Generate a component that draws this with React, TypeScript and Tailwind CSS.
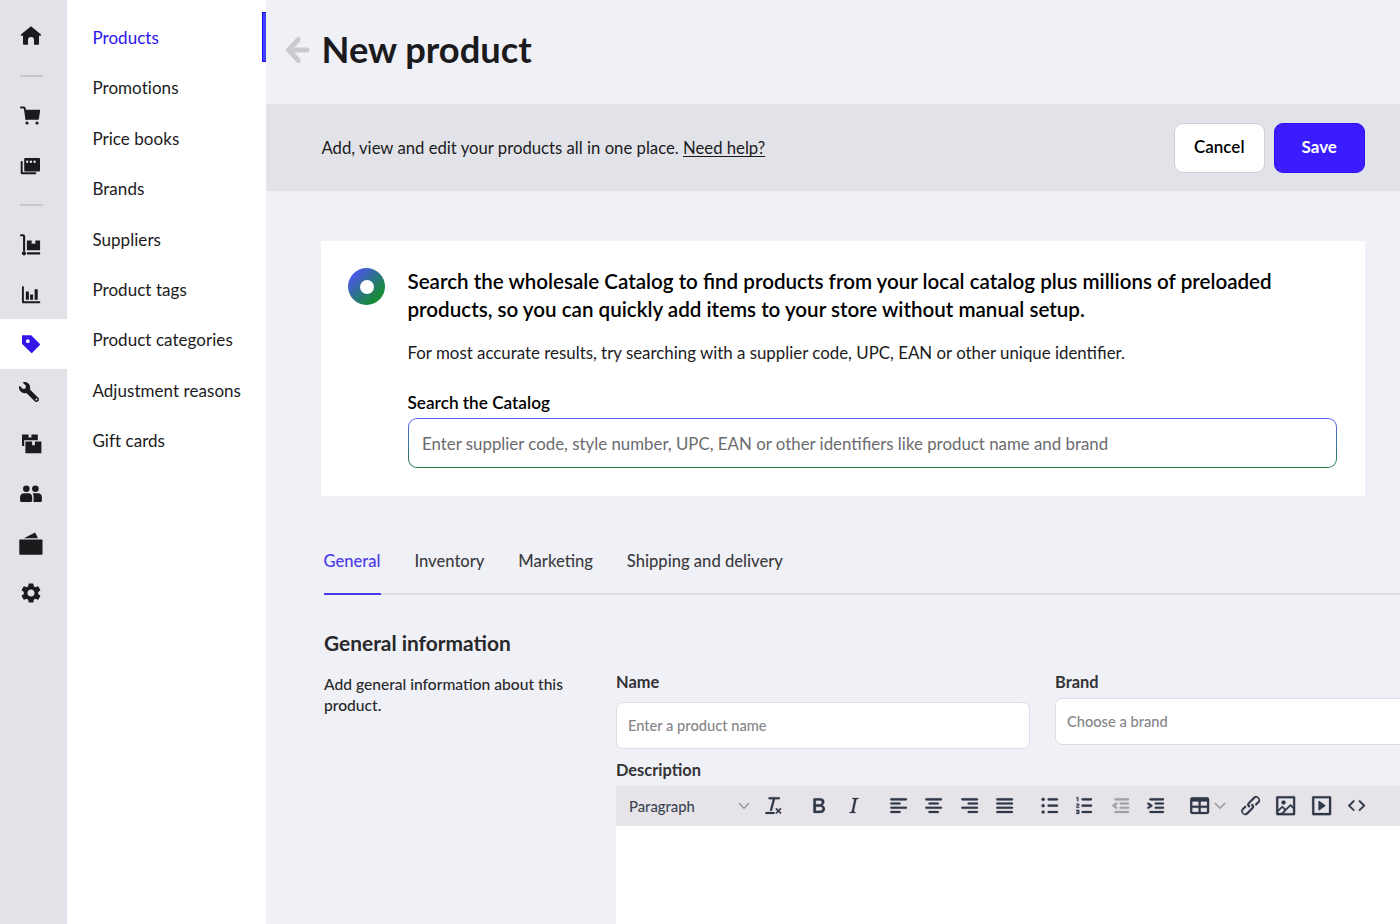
import React from 'react';
import { FaWrench } from 'react-icons/fa';
import { MdSettings } from 'react-icons/md';

type IconProps = { children: React.ReactNode; className?: string };

const NavIcon: React.FC<IconProps> = ({ children, className = 'text-[#1b1b1d]' }) => (
  <svg viewBox="0 0 24 24" className={`h-6 w-6 ${className}`} fill="currentColor">
    {children}
  </svg>
);

const HomeIcon = () => (
  <NavIcon>
    <path d="M12 2.3 22 10.6c.3.6 0 1.2-.7 1.2H20v8.1c0 .5-.3.8-.8.8H15v-4.6a3 3 0 0 0-6 0v4.6H4.8c-.5 0-.8-.3-.8-.8v-8.1H2.5c-.7 0-1-.6-.6-1.2Z" />
  </NavIcon>
);

const CartIcon = () => (
  <NavIcon>
    <path d="M2 3.5h2.8c.6 0 .9.3 1 .8l1.6 11" fill="none" stroke="currentColor" strokeWidth="1.9" strokeLinecap="round" />
    <path d="M5.8 5.7h14.6c.5 0 .8.4.7.9l-1.2 8.3c-.1.5-.4.8-.9.8H7.2Z" />
    <circle cx="8" cy="19" r="1.6" />
    <circle cx="18" cy="19" r="1.6" />
  </NavIcon>
);

const RegisterIcon = () => (
  <NavIcon>
    <rect x="5.2" y="4.1" width="15.8" height="13.3" rx="1" />
    <path d="M2.7 8v11.3h13.6" fill="none" stroke="currentColor" strokeWidth="2" strokeLinecap="round" strokeLinejoin="round" />
    <g fill="#e2e3e9">
      <circle cx="8.2" cy="7.8" r="1.2" />
      <circle cx="11.9" cy="7.8" r="1.2" />
      <circle cx="15.6" cy="7.8" r="1.2" />
    </g>
  </NavIcon>
);

const TrolleyIcon = () => (
  <NavIcon>
    <path d="M2 2.3h2c.7 0 1.1.4 1.1 1.1v14" fill="none" stroke="currentColor" strokeWidth="2.1" strokeLinecap="round" />
    <path d="M8.4 7.6h4.3v3.6l1.8-1 1.8 1V7.6h4.3c.3 0 .5.2.5.5v8.6c0 .3-.2.5-.5.5H8.4c-.3 0-.5-.2-.5-.5V8.1c0-.3.2-.5.5-.5Z" />
    <circle cx="5" cy="20.3" r="2.1" />
    <rect x="8" y="19.2" width="13.1" height="2.2" rx=".5" />
  </NavIcon>
);

const ChartIcon = () => (
  <NavIcon>
    <path d="M3.9 4v15.3h16.5" fill="none" stroke="currentColor" strokeWidth="1.9" strokeLinecap="round" strokeLinejoin="round" />
    <path d="M6.8 8.4h3.1v8.4H6.8zM11.1 11.6h3v5.2h-3zM15.6 6.3h3.1v10.5h-3.1z" />
  </NavIcon>
);

const TagIcon = () => (
  <NavIcon className="text-[#3316e8]">
    <path
      fillRule="evenodd"
      d="M3.6 3.2h7.9c.4 0 .8.1 1 .4l8.4 8.3c.4.4.4.8 0 1.2l-7.6 7.7c-.4.4-.9.4-1.2 0l-8.7-8.5c-.3-.3-.4-.6-.4-1V3.8c0-.4.2-.6.6-.6Zm5.2 4.1a1.9 1.9 0 1 0 0 3.8 1.9 1.9 0 0 0 0-3.8Z"
    />
  </NavIcon>
);

const BoxesIcon = () => (
  <NavIcon>
    <path d="M3 2.6h6.6v3.2l1.4-.6 1.4.6V2.6h6.4v5.7H5.2v5.6H3Z" />
    <path d="M6.4 9.4h6.7v4.2l1.4-.6 1.4.6V9.4h6.5v11.8h-16Z" />
  </NavIcon>
);

const CustomersIcon = () => (
  <NavIcon>
    <circle cx="7.3" cy="6.7" r="3.3" />
    <circle cx="16.4" cy="6.7" r="3.3" />
    <path d="M5.2 11.2h4c2.4 0 4 1.6 4 4v3.6c0 .7-.5 1.2-1.2 1.2H2.3c-.7 0-1.2-.5-1.2-1.2v-3.6c0-2.4 1.7-4 4.1-4Z" />
    <path d="M13.7 11.2h5.2c2.4 0 4 1.6 4 4v3.6c0 .7-.5 1.2-1.2 1.2h-7.6c.3-.5.5-1 .5-1.6v-3.5c0-1.5-.3-2.7-.9-3.7Z" />
  </NavIcon>
);

const WalletIcon = () => (
  <NavIcon>
    <path d="M5 6.2 16.1.5 19 6.2Z" />
    <rect x=".3" y="7.5" width="23.2" height="15.3" rx=".8" />
  </NavIcon>
);

const SideRow: React.FC<{ children: React.ReactNode; active?: boolean }> = ({ children, active }) => (
  <div className={`flex h-[49.8px] w-full items-center pt-px pl-[19px] ${active ? 'bg-white' : ''}`}>{children}</div>
);

const SideDivider = () => <div className="ml-5 h-[1.5px] w-[22.5px] bg-[#c8c8cc]" />;

const menuItems = [
  'Products',
  'Promotions',
  'Price books',
  'Brands',
  'Suppliers',
  'Product tags',
  'Product categories',
  'Adjustment reasons',
  'Gift cards',
];

const tabs = [
  { label: 'General', active: true },
  { label: 'Inventory' },
  { label: 'Marketing' },
  { label: 'Shipping and delivery' },
];

const ToolIcon: React.FC<{ d: string; muted?: boolean; children?: React.ReactNode }> = ({ d, muted, children }) => (
  <div className="flex w-[35.5px] shrink-0 justify-center">
    <svg
      viewBox="0 0 24 24"
      className={`h-[25.3px] w-[25.3px] shrink-0 ${muted ? 'text-[#a0a1a6]' : 'text-[#2f3848]'}`}
      fill="currentColor"
      stroke="currentColor"
      strokeWidth="0.2"
    >
      <path fillRule="evenodd" d={d} />
      {children}
    </svg>
  </div>
);

const Chevron = () => (
  <svg viewBox="0 0 12 8" className="h-2 w-3 shrink-0" fill="none" stroke="#97989d" strokeWidth="1.5" strokeLinecap="round" strokeLinejoin="round">
    <path d="m1.4 1.4 4.6 4.8 4.6-4.8" />
  </svg>
);

const line = {
  full: 'h14a1 1 0 0 1 0 2H5a1 1 0 0 1 0-2Z',
  short: 'h8a1 1 0 0 1 0 2H5a1 1 0 0 1 0-2Z',
};

const EditorToolbar = () => (
  <div className="flex h-10 items-center bg-[#e6e4e8] pl-[13px]">
    <span className="w-[108.5px] text-[14.8px] font-medium text-[#3c4453]">Paragraph</span>
    <Chevron />
    <div className="ml-[6.5px] flex">
      <ToolIcon d="M13.2 6a1 1 0 0 1 0 .2l-2.6 10a1 1 0 0 1-1 .8h-.2a.8.8 0 0 1-.8-1l2.6-10H8a1 1 0 1 1 0-2h9a1 1 0 0 1 0 2h-3.8ZM5 18h7a1 1 0 0 1 0 2H5a1 1 0 0 1 0-2Zm13 1.5L16.5 18 15 19.5a.7.7 0 0 1-1-1l1.5-1.5-1.5-1.5a.7.7 0 0 1 1-1l1.5 1.5 1.5-1.5a.7.7 0 0 1 1 1L17.5 17l1.5 1.5a.7.7 0 0 1-1 1Z" />
    </div>
    <div className="ml-[9px] flex">
      <ToolIcon d="M7.8 19c-.3 0-.5 0-.6-.2l-.2-.5V5.7c0-.2 0-.4.2-.5l.6-.2h5c1.5 0 2.7.3 3.5 1 .7.6 1.1 1.4 1.1 2.5a3 3 0 0 1-.6 1.9c-.4.6-1 1-1.6 1.2.4.1.9.3 1.3.6s.8.7 1 1.2c.4.4.5 1 .5 1.6 0 1.3-.4 2.3-1.3 3-.8.7-2.1 1-3.8 1H7.8Zm5-8.3c.6 0 1.2-.1 1.6-.5.4-.3.6-.7.6-1.3 0-1.1-.8-1.7-2.3-1.7H9.3v3.5h3.4Zm.5 6c.7 0 1.3-.1 1.7-.4.4-.4.6-.9.6-1.5s-.2-1-.7-1.4c-.4-.3-1-.4-2-.4H9.4v3.8h4Z" />
      <ToolIcon d="m16.7 4.7-.1.9h-.3c-.6 0-1 0-1.4.3-.3.3-.4.6-.5 1.1l-2.1 9.8v.6c0 .5.4.8 1.4.8h.2l-.2.8H8l.2-.8h.2c1.1 0 1.8-.5 2-1.5l2-9.8.1-.5c0-.6-.4-.8-1.4-.8h-.3l.2-.9h5.8Z" />
    </div>
    <div className="ml-[9px] flex">
      <ToolIcon d={`M5 5${line.full}M5 9${line.short}M5 13${line.full}M5 17${line.short}`} />
      <ToolIcon d="M5 5h14a1 1 0 0 1 0 2H5a1 1 0 0 1 0-2Zm3 4h8a1 1 0 0 1 0 2H8a1 1 0 0 1 0-2Zm0 8h8a1 1 0 0 1 0 2H8a1 1 0 0 1 0-2Zm-3-4h14a1 1 0 0 1 0 2H5a1 1 0 0 1 0-2Z" />
      <ToolIcon d="M5 5h14a1 1 0 0 1 0 2H5a1 1 0 0 1 0-2Zm6 4h8a1 1 0 0 1 0 2h-8a1 1 0 0 1 0-2Zm0 8h8a1 1 0 0 1 0 2h-8a1 1 0 0 1 0-2Zm-6-4h14a1 1 0 0 1 0 2H5a1 1 0 0 1 0-2Z" />
      <ToolIcon d={`M5 5${line.full}M5 9${line.full}M5 13${line.full}M5 17${line.full}`} />
    </div>
    <div className="ml-[9px] flex">
      <ToolIcon d="M11 5h8a1 1 0 0 1 0 2h-8a1 1 0 0 1 0-2Zm0 6h8a1 1 0 0 1 0 2h-8a1 1 0 0 1 0-2Zm0 6h8a1 1 0 0 1 0 2h-8a1 1 0 0 1 0-2Z">
        <circle cx="5.8" cy="6" r="1.5" />
        <circle cx="5.8" cy="12" r="1.5" />
        <circle cx="5.8" cy="18" r="1.5" />
      </ToolIcon>
      <ToolIcon d="M10 17h8c.6 0 1 .4 1 1s-.4 1-1 1h-8a1 1 0 0 1 0-2Zm0-6h8c.6 0 1 .4 1 1s-.4 1-1 1h-8a1 1 0 0 1 0-2Zm0-6h8c.6 0 1 .4 1 1s-.4 1-1 1h-8a1 1 0 1 1 0-2ZM6 4v3.5c0 .3-.2.5-.5.5a.5.5 0 0 1-.5-.5V5h-.5a.5.5 0 0 1 0-1H6Zm-1 8.8.2.2h1.3c.3 0 .5.2.5.5s-.2.5-.5.5H4.9a1 1 0 0 1-.9-1V13c0-.4.3-.8.6-1l1.2-.4.2-.3a.2.2 0 0 0-.2-.2H4.5a.5.5 0 0 1-.5-.5c0-.3.2-.5.5-.5h1.6c.5 0 .9.4.9 1v.1c0 .4-.3.8-.6 1l-1.2.4-.2.3ZM7 17v2c0 .6-.4 1-1 1H4.5a.5.5 0 0 1 0-1h1.2c.2 0 .3-.1.3-.3 0-.2-.1-.3-.3-.3H4.4a.4.4 0 1 1 0-.8h1.3c.2 0 .3-.1.3-.3 0-.2-.1-.3-.3-.3H4.5a.5.5 0 1 1 0-1H6c.6 0 1 .4 1 1Z" />
      <ToolIcon muted d="M7 5h12a1 1 0 0 1 0 2H7a1 1 0 1 1 0-2Zm5 4h7a1 1 0 0 1 0 2h-7a1 1 0 0 1 0-2Zm0 4h7a1 1 0 0 1 0 2h-7a1 1 0 0 1 0-2Zm-5 4h12a1 1 0 0 1 0 2H7a1 1 0 0 1 0-2Zm1.6-3.8a1 1 0 0 1-1.2 1.6l-3-2a1 1 0 0 1 0-1.6l3-2a1 1 0 0 1 1.2 1.6L6.8 12l1.8 1.2Z" />
      <ToolIcon d="M7 5h12a1 1 0 0 1 0 2H7a1 1 0 1 1 0-2Zm5 4h7a1 1 0 0 1 0 2h-7a1 1 0 0 1 0-2Zm0 4h7a1 1 0 0 1 0 2h-7a1 1 0 0 1 0-2Zm-5 4h12a1 1 0 0 1 0 2H7a1 1 0 0 1 0-2Zm-2.6-3.8L6.2 12l-1.8-1.2a1 1 0 0 1 1.2-1.6l3 2a1 1 0 0 1 0 1.6l-3 2a1 1 0 1 1-1.2-1.6Z" />
    </div>
    <div className="ml-[8px] flex w-[51.2px] items-center">
      <ToolIcon d="M19 4a2 2 0 0 1 2 2v12a2 2 0 0 1-2 2H5a2 2 0 0 1-2-2V6c0-1.1.9-2 2-2h14ZM5 14v4h6v-4H5Zm14 0h-6v4h6v-4Zm0-6h-6v4h6V8ZM5 12h6V8H5v4Z" />
      <div className="-ml-[3px]">
        <Chevron />
      </div>
    </div>
    <div className="flex">
      <ToolIcon d="M6.2 12.3a1 1 0 0 1 1.4 1.4l-2 2a2 2 0 1 0 2.6 2.8l4.8-4.8a1 1 0 0 0 0-1.4 1 1 0 1 1 1.4-1.3 2.9 2.9 0 0 1 0 4L9.6 20a3.9 3.9 0 0 1-5.5-5.5l2-2Zm11.6-.6a1 1 0 0 1-1.4-1.4l2-2a2 2 0 1 0-2.6-2.8L11 10.3a1 1 0 0 0 0 1.4A1 1 0 1 1 9.6 13a2.9 2.9 0 0 1 0-4L14.4 4a3.9 3.9 0 0 1 5.5 5.5l-2 2Z" />
      <ToolIcon d="m5 15.7 3.3-3.2c.3-.3.7-.3 1 0L12 15l4.1-4c.3-.4.8-.4 1 0l2 1.9V5H5v10.7ZM5 18V19h3l2.8-2.9-2-2L5 17.9Zm14-3-2.5-2.4-6.4 6.5H19v-4ZM4 3h16c.6 0 1 .4 1 1v16c0 .6-.4 1-1 1H4a1 1 0 0 1-1-1V4c0-.6.4-1 1-1Zm6 8a2 2 0 1 0 0-4 2 2 0 0 0 0 4Z" />
      <ToolIcon d="M4 3h16c.6 0 1 .4 1 1v16c0 .6-.4 1-1 1H4a1 1 0 0 1-1-1V4c0-.6.4-1 1-1Zm1 2v14h14V5H5Zm4.8 2.6 5.6 4a.5.5 0 0 1 0 .8l-5.6 4A.5.5 0 0 1 9 16V8a.5.5 0 0 1 .8-.4Z" />
      <ToolIcon d="M9.8 15.7c.3.3.3.8 0 1-.3.4-.9.4-1.2 0l-4.4-4.1a.8.8 0 0 1 0-1.2l4.4-4.2c.3-.3.9-.3 1.2 0 .3.3.3.8 0 1.1L6 12l3.8 3.7Zm4.4 0c-.3.3-.3.8 0 1 .4.4.9.4 1.2 0l4.4-4.1c.3-.3.3-.9 0-1.2l-4.4-4.2a.8.8 0 0 0-1.2 0c-.3.3-.3.8 0 1.1L18 12l-3.8 3.7Z" />
    </div>
  </div>
);

const App: React.FC = () => {
  return (
    <div className="flex h-[924px] w-[1400px] overflow-hidden bg-[#f0f1f7] font-['Lato',sans-serif] text-[#1b1b1d]">
      <nav className="w-[67px] shrink-0 bg-[#e2e3e9] pt-[11px]">
        <SideRow><HomeIcon /></SideRow>
        <div className="flex h-[30px] items-center"><SideDivider /></div>
        <SideRow><CartIcon /></SideRow>
        <SideRow><RegisterIcon /></SideRow>
        <div className="flex h-[29px] items-center"><SideDivider /></div>
        <SideRow><TrolleyIcon /></SideRow>
        <SideRow><ChartIcon /></SideRow>
        <SideRow active><TagIcon /></SideRow>
        <SideRow><FaWrench className="mb-[4px] h-5 w-5 -scale-x-100" /></SideRow>
        <SideRow><BoxesIcon /></SideRow>
        <SideRow><CustomersIcon /></SideRow>
        <SideRow><WalletIcon /></SideRow>
        <SideRow><MdSettings className="h-6 w-6" /></SideRow>
      </nav>

      <aside className="w-[199px] shrink-0 bg-white pt-[12px]">
        {menuItems.map((item, index) => (
          <div key={item} className="flex h-[50.4px] justify-between">
            <span className={`pl-[25.4px] text-[17px] leading-[52px] tracking-[0.05px] whitespace-nowrap [font-variant-ligatures:none] ${index === 0 ? 'text-[#2a12f0]' : ''}`}>
              {item}
            </span>
            {index === 0 && <span className="h-[50.4px] w-[4.5px] shrink-0 border border-r-0 border-[#1c10f0] bg-[#4040ff]" />}
          </div>
        ))}
      </aside>

      <main className="min-w-0 flex-1 overflow-hidden">
        <header className="flex h-[104px] items-center pb-[5px] pl-[19px]">
          <svg viewBox="0 0 26 28" className="h-7 w-[26px]" fill="none" stroke="#cbcbce" strokeWidth="5" strokeLinecap="round" strokeLinejoin="round">
            <path d="M13.2 3.6 3.6 14l9.6 10.4M4.5 14h17.4" />
          </svg>
          <h1 className="mb-[2px] ml-[10.5px] text-[36.3px] leading-[44px] font-bold">New product</h1>
        </header>

        <div className="flex h-[87px] items-center justify-between bg-[#e2e3e9] pr-[35.5px] pl-[55.5px]">
          <p className="mt-[3px] text-[16.72px]">
            Add, view and edit your products all in one place.{' '}
            <a className="underline underline-offset-2">Need help?</a>
          </p>
          <div className="flex gap-[9.5px]">
            <button className="h-[50px] w-[90.5px] rounded-[9px] border border-[#d0d0d5] bg-white pb-px text-[17px] font-semibold text-black">Cancel</button>
            <button className="h-[50px] w-[90.5px] rounded-[9px] border border-[#2a10f5] bg-[#3b1cff] pb-px text-[17px] font-bold text-white">Save</button>
          </div>
        </div>

        <section className="mt-[50px] ml-[55px] flex h-[254.5px] w-[1043.5px] bg-white pt-[27px] pl-[27px]">
          <div className="flex h-[37px] w-[37px] shrink-0 items-center justify-center rounded-full bg-[linear-gradient(135deg,#4f55f5_12%,#2f6f95_45%,#188a38_78%)]">
            <div className="h-[14px] w-[14px] rounded-full bg-white" />
          </div>
          <div className="ml-[22.5px] w-[929.5px]">
            <h2 className="text-[20.58px] leading-[27.5px] font-semibold whitespace-nowrap text-black">
              Search the wholesale Catalog to find products from your local catalog plus millions of preloaded
              <br />
              products, so you can quickly add items to your store without manual setup.
            </h2>
            <p className="mt-[18px] text-[16.87px] leading-6">
              For most accurate results, try searching with a supplier code, UPC, EAN or other unique identifier.
            </p>
            <label className="mt-[26px] block text-[17.2px] leading-6 font-semibold text-black">Search the Catalog</label>
            <div className="mt-[3px] h-[50px] rounded-[9px] bg-linear-to-b from-[#5b5df5] to-[#2a7a48] p-px">
              <div className="flex h-full items-center rounded-[8px] bg-white pt-[2px] pl-[13.5px] text-[16.85px] text-[#6b6b6e]">
                Enter supplier code, style number, UPC, EAN or other identifiers like product name and brand
              </div>
            </div>
          </div>
        </section>

        <div className="mt-[48px] ml-[57.5px] flex h-[51px] gap-[33.8px] border-b-2 border-[#dcdde2]">
          {tabs.map(tab => (
            <div
              key={tab.label}
              className={`-mb-[2px] pt-[5px] text-[16.6px] leading-6 font-medium ${tab.active ? 'border-b-[2.5px] border-[#4a3be8] text-[#4a3be8]' : 'text-[#3c3c40]'}`}
            >
              {tab.label}
            </div>
          ))}
        </div>

        <div className="flex pl-[58px]">
          <div className="w-[292px] shrink-0 pt-[34.5px]">
            <h3 className="text-[20.9px] leading-7 font-bold text-[#28282a]">General information</h3>
            <p className="mt-[17px] w-[250px] text-[15.6px] leading-[21px] font-medium text-[#28282a]">Add general information about this product.</p>
          </div>
          <div className="shrink-0 pt-[77.5px]">
            <div className="flex gap-[25px]">
              <div className="w-[414px]">
                <label className="block text-[16.4px] leading-5 font-bold text-[#333336]">Name</label>
                <div className="mt-[10px] flex h-[46.5px] items-center rounded-[7px] border-[1.5px] border-[#dcdce2] bg-white pt-px pl-[11px] text-[14.65px] font-medium text-[#858588]">
                  Enter a product name
                </div>
              </div>
              <div className="w-[414px]">
                <label className="block text-[16.4px] leading-5 font-bold text-[#333336]">Brand</label>
                <div className="mt-[6px] flex h-[46.5px] items-center rounded-[7px] border-[1.5px] border-[#dcdce2] bg-white pt-px pl-[11px] text-[14.65px] font-medium text-[#858588]">
                  Choose a brand
                </div>
              </div>
            </div>
            <label className="mt-[11px] block text-[16.4px] leading-5 font-bold text-[#333336]">Description</label>
            <div className="mt-[6.5px] w-[853px]">
              <EditorToolbar />
              <div className="h-[120px] bg-white" />
            </div>
          </div>
        </div>
      </main>
    </div>
  );
};

export default App;
